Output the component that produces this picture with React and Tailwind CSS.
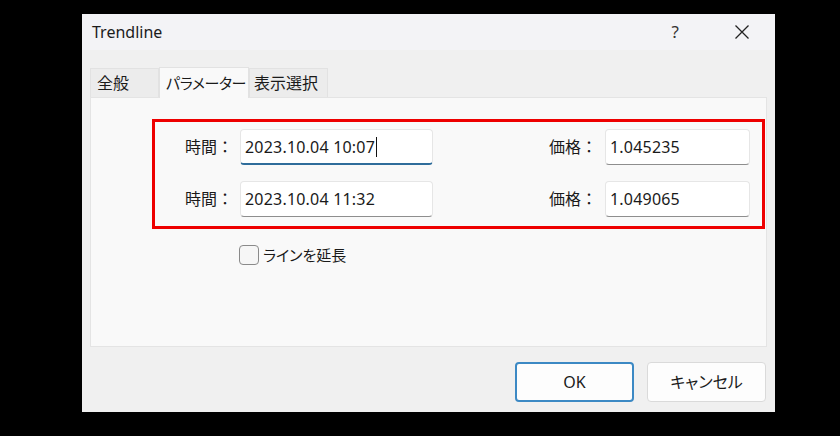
import React from "react";

const F = "font-['Noto_Sans','Noto_Sans_CJK_JP',sans-serif]";

function Field({ value, focused, width }) {
  return (
    <div
      className={`relative h-[36px] ${width} bg-white rounded-[4px] border border-[#e6e6e6] flex items-center pl-[4px] text-[16px] text-[#1a1a1a] ${
        focused ? "border-b-2 border-b-[#2f6d9b]" : "border-b-[#8e8e8e]"
      }`}
    >
      <span className="leading-none tracking-[0.2px]">{value}</span>
      {focused && <span className="ml-[1px] w-[1px] h-[20px] bg-[#111]" />}
    </div>
  );
}

function Row({ t, p, focused }) {
  return (
    <div className="flex items-center">
      <div className="w-[55px] text-[16px] text-[#1a1a1a] whitespace-nowrap">時間：</div>
      <Field value={t} focused={focused} width="w-[193px]" />
      <div className="ml-[116px] w-[56px] text-[16px] text-[#1a1a1a] whitespace-nowrap">価格：</div>
      <Field value={p} width="w-[145px]" />
    </div>
  );
}

export default function App() {
  return (
    <div className={`w-[840px] h-[436px] bg-black pt-[14px] pl-[82px] ${F}`}>
      <div className="w-[693px] h-[398px] bg-[#f0f0f0] flex flex-col">
        <div className="h-[36px] bg-[#f3f3f6] flex items-center pl-[10px]">
          <span className="text-[16px] text-[#1b1b1b]">Trendline</span>
          <span className="ml-auto mr-[55px] text-[17px] text-[#333]">?</span>
          <svg width="16" height="16" viewBox="0 0 16 16" className="mr-[25px]">
            <path d="M1.5 1.5 L14.5 14.5 M14.5 1.5 L1.5 14.5" stroke="#222" strokeWidth="1.3" fill="none" />
          </svg>
        </div>
        <div className="flex-1 flex flex-col px-[8px] pt-[17px]">
          <div className="flex items-end h-[30px] text-[16px] text-[#1a1a1a] whitespace-nowrap">
            <div className="w-[69px] h-[29px] bg-[#ececec] border border-[#e2e2e2] border-b-0 flex items-center pl-[6px]">全般</div>
            <div className="w-[90px] h-[31px] bg-[#f9f9f9] border border-[#e2e2e2] border-b-0 flex items-center pl-[6px] -mb-[1px] relative z-10 text-[15px] tracking-[-0.4px] [font-feature-settings:'palt']">パラメーター</div>
            <div className="w-[79px] h-[29px] bg-[#ececec] border border-[#e2e2e2] border-b-0 flex items-center pl-[4px]">表示選択</div>
          </div>
          <div className="h-[250px] bg-[#f9f9f9] border border-[#e4e4e4] flex flex-col">
            <div className="ml-[61px] mt-[21px] w-[613px] h-[110px] border-[3px] border-[#ee0000] pt-[7px] pl-[30px] flex flex-col gap-[16px]">
              <Row t="2023.10.04 10:07" p="1.045235" focused />
              <Row t="2023.10.04 11:32" p="1.049065" />
            </div>
            <div className="ml-[148px] mt-[15px] flex items-center gap-[4px]">
              <div className="w-[20px] h-[20px] rounded-[4px] border border-[#8a8a8a] bg-[#f6f6f6]" />
              <span className="text-[15px] text-[#1a1a1a] [font-feature-settings:'palt']">ラインを延長</span>
            </div>
          </div>
          <div className="flex justify-end gap-[13px] mt-[15px] pr-[1px]">
            <div className="w-[119px] h-[40px] rounded-[4px] border-2 border-[#3c89c4] bg-[#fdfdfd] flex items-center justify-center text-[16px] text-[#1a1a1a]">OK</div>
            <div className="w-[119px] h-[40px] rounded-[4px] border border-[#dadada] bg-[#fdfdfd] flex items-center justify-center text-[16px] text-[#1a1a1a] [font-feature-settings:'palt']">キャンセル</div>
          </div>
        </div>
      </div>
    </div>
  );
}
